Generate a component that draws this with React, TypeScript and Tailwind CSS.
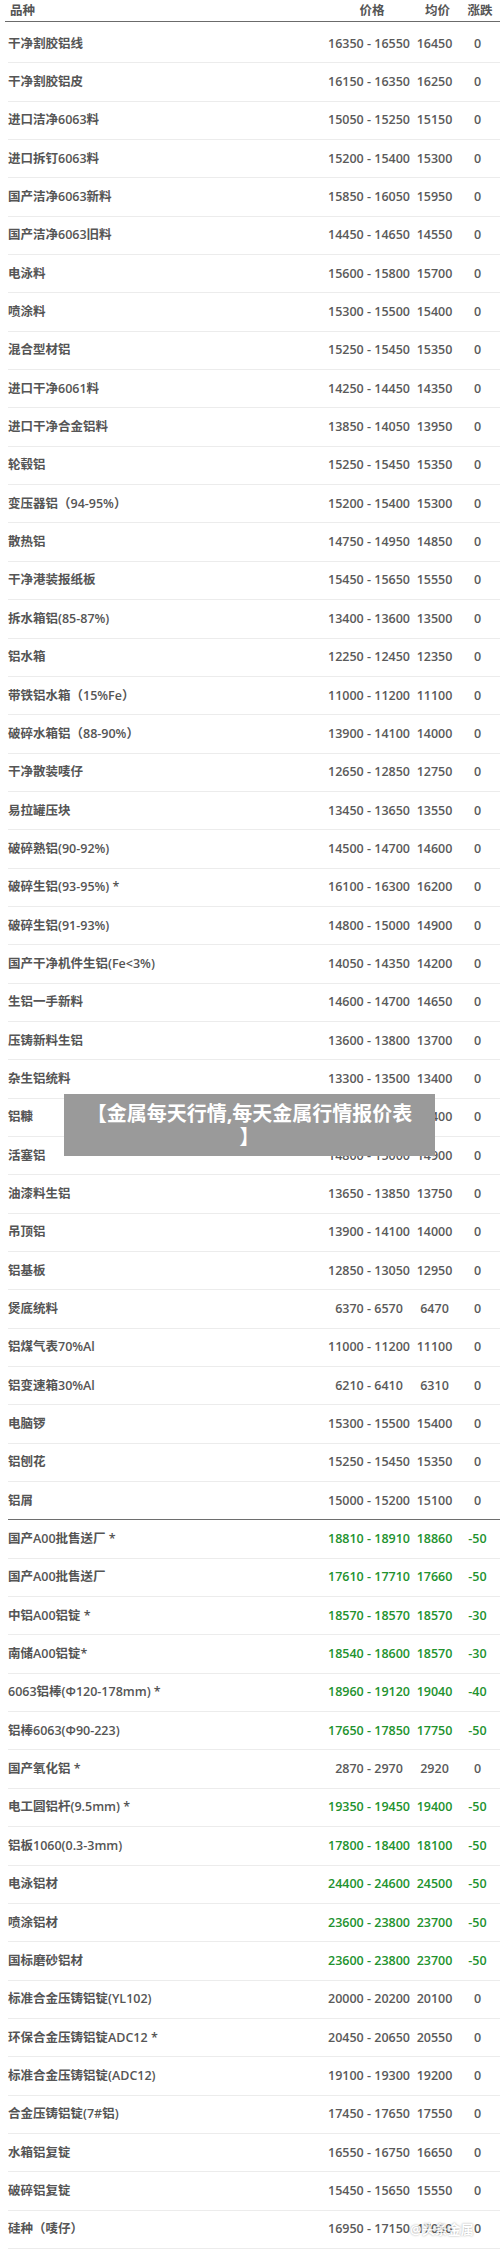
type Row = {
  name: string;
  low: number;
  high: number;
  avg: number;
  change: number;
  divider?: boolean;
};

const rows: Row[] = [
  { name: '干净割胶铝线', low: 16350, high: 16550, avg: 16450, change: 0 },
  { name: '干净割胶铝皮', low: 16150, high: 16350, avg: 16250, change: 0 },
  { name: '进口洁净6063料', low: 15050, high: 15250, avg: 15150, change: 0 },
  { name: '进口拆钉6063料', low: 15200, high: 15400, avg: 15300, change: 0 },
  { name: '国产洁净6063新料', low: 15850, high: 16050, avg: 15950, change: 0 },
  { name: '国产洁净6063旧料', low: 14450, high: 14650, avg: 14550, change: 0 },
  { name: '电泳料', low: 15600, high: 15800, avg: 15700, change: 0 },
  { name: '喷涂料', low: 15300, high: 15500, avg: 15400, change: 0 },
  { name: '混合型材铝', low: 15250, high: 15450, avg: 15350, change: 0 },
  { name: '进口干净6061料', low: 14250, high: 14450, avg: 14350, change: 0 },
  { name: '进口干净合金铝料', low: 13850, high: 14050, avg: 13950, change: 0 },
  { name: '轮毂铝', low: 15250, high: 15450, avg: 15350, change: 0 },
  { name: '变压器铝（94-95%）', low: 15200, high: 15400, avg: 15300, change: 0 },
  { name: '散热铝', low: 14750, high: 14950, avg: 14850, change: 0 },
  { name: '干净港装报纸板', low: 15450, high: 15650, avg: 15550, change: 0 },
  { name: '拆水箱铝(85-87%)', low: 13400, high: 13600, avg: 13500, change: 0 },
  { name: '铝水箱', low: 12250, high: 12450, avg: 12350, change: 0 },
  { name: '带铁铝水箱（15%Fe）', low: 11000, high: 11200, avg: 11100, change: 0 },
  { name: '破碎水箱铝（88-90%）', low: 13900, high: 14100, avg: 14000, change: 0 },
  { name: '干净散装唛仔', low: 12650, high: 12850, avg: 12750, change: 0 },
  { name: '易拉罐压块', low: 13450, high: 13650, avg: 13550, change: 0 },
  { name: '破碎熟铝(90-92%)', low: 14500, high: 14700, avg: 14600, change: 0 },
  { name: '破碎生铝(93-95%) *', low: 16100, high: 16300, avg: 16200, change: 0 },
  { name: '破碎生铝(91-93%)', low: 14800, high: 15000, avg: 14900, change: 0 },
  { name: '国产干净机件生铝(Fe<3%)', low: 14050, high: 14350, avg: 14200, change: 0 },
  { name: '生铝一手新料', low: 14600, high: 14700, avg: 14650, change: 0 },
  { name: '压铸新料生铝', low: 13600, high: 13800, avg: 13700, change: 0 },
  { name: '杂生铝统料', low: 13300, high: 13500, avg: 13400, change: 0 },
  { name: '铝糠', low: 14300, high: 14500, avg: 14400, change: 0 },
  { name: '活塞铝', low: 14800, high: 15000, avg: 14900, change: 0 },
  { name: '油漆料生铝', low: 13650, high: 13850, avg: 13750, change: 0 },
  { name: '吊顶铝', low: 13900, high: 14100, avg: 14000, change: 0 },
  { name: '铝基板', low: 12850, high: 13050, avg: 12950, change: 0 },
  { name: '煲底统料', low: 6370, high: 6570, avg: 6470, change: 0 },
  { name: '铝煤气表70%Al', low: 11000, high: 11200, avg: 11100, change: 0 },
  { name: '铝变速箱30%Al', low: 6210, high: 6410, avg: 6310, change: 0 },
  { name: '电脑锣', low: 15300, high: 15500, avg: 15400, change: 0 },
  { name: '铝刨花', low: 15250, high: 15450, avg: 15350, change: 0 },
  { name: '铝屑', low: 15000, high: 15200, avg: 15100, change: 0, divider: true },
  { name: '国产A00批售送厂 *', low: 18810, high: 18910, avg: 18860, change: -50 },
  { name: '国产A00批售送厂', low: 17610, high: 17710, avg: 17660, change: -50 },
  { name: '中铝A00铝锭 *', low: 18570, high: 18570, avg: 18570, change: -30 },
  { name: '南储A00铝锭*', low: 18540, high: 18600, avg: 18570, change: -30 },
  { name: '6063铝棒(Φ120-178mm) *', low: 18960, high: 19120, avg: 19040, change: -40 },
  { name: '铝棒6063(Φ90-223)', low: 17650, high: 17850, avg: 17750, change: -50 },
  { name: '国产氧化铝 *', low: 2870, high: 2970, avg: 2920, change: 0 },
  { name: '电工圆铝杆(9.5mm) *', low: 19350, high: 19450, avg: 19400, change: -50 },
  { name: '铝板1060(0.3-3mm)', low: 17800, high: 18400, avg: 18100, change: -50 },
  { name: '电泳铝材', low: 24400, high: 24600, avg: 24500, change: -50 },
  { name: '喷涂铝材', low: 23600, high: 23800, avg: 23700, change: -50 },
  { name: '国标磨砂铝材', low: 23600, high: 23800, avg: 23700, change: -50 },
  { name: '标准合金压铸铝锭(YL102)', low: 20000, high: 20200, avg: 20100, change: 0 },
  { name: '环保合金压铸铝锭ADC12 *', low: 20450, high: 20650, avg: 20550, change: 0 },
  { name: '标准合金压铸铝锭(ADC12)', low: 19100, high: 19300, avg: 19200, change: 0 },
  { name: '合金压铸铝锭(7#铝)', low: 17450, high: 17650, avg: 17550, change: 0 },
  { name: '水箱铝复锭', low: 16550, high: 16750, avg: 16650, change: 0 },
  { name: '破碎铝复锭', low: 15450, high: 15650, avg: 15550, change: 0 },
  { name: '硅种（唛仔）', low: 16950, high: 17150, avg: 17050, change: 0 },
];

function PriceRow({ row }: { row: Row }) {
  const tone = row.change < 0 ? 'text-[#22922e]' : 'text-[#5a5a5a]';
  return (
    <div
      className={`ml-[3px] flex h-[38.35px] items-center ${
        row.divider ? 'border-b-[1.5px] border-[#6e6e6e]' : 'border-b border-[#ececec]'
      }`}
    >
      <div className="min-w-0 flex-1 whitespace-nowrap text-[#555]">{row.name}</div>
      <div className={`w-[90px] whitespace-nowrap text-center ${tone}`}>
        {row.low} - {row.high}
      </div>
      <div className={`w-[41px] text-center ${tone}`}>{row.avg}</div>
      <div className={`w-[45px] text-center ${tone}`}>{row.change}</div>
    </div>
  );
}

export default function App() {
  return (
    <div className="relative w-[500px] bg-white pl-[5px] font-['Open_Sans','Noto_Sans_CJK_SC',sans-serif] text-[12.5px] font-semibold leading-[18px]">
      <div className="flex h-[22px] items-center border-b-[1.5px] border-[#6b6b6b] text-[#555]">
        <div className="flex-1 pl-[5px]">品种</div>
        <div className="w-[90px] pl-[6px] text-center">价格</div>
        <div className="w-[41px] pl-[6px] text-center">均价</div>
        <div className="w-[45px] pl-[5px] text-center">涨跌</div>
      </div>

      <div className="mt-[3px]">
        {rows.map((row, i) => (
          <PriceRow key={i} row={row} />
        ))}
      </div>

      {/* title overlay */}
      <div className="absolute left-[64px] top-[1094px] flex h-[62px] w-[371px] flex-col items-center justify-center bg-[#9a9a9a] text-center text-[20px] font-bold leading-[23px] text-white">
        <span>【金属每天行情,每天金属行情报价表</span>
        <span>】</span>
      </div>

      {/* watermark */}
      <div className="absolute left-[410px] top-[2220px] text-[13px] font-bold text-white opacity-80 [text-shadow:0_0_2px_rgba(0,0,0,0.45)]">
        @头条金属
      </div>
    </div>
  );
}
